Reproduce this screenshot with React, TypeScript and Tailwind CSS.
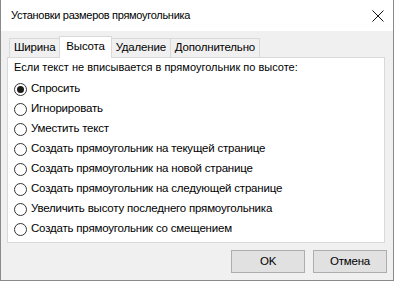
const options = [
  "Спросить",
  "Игнорировать",
  "Уместить текст",
  "Создать прямоугольник на текущей странице",
  "Создать прямоугольник на новой странице",
  "Создать прямоугольник на следующей странице",
  "Увеличить высоту последнего прямоугольника",
  "Создать прямоугольник со смещением",
];

const tabs = ["Ширина", "Высота", "Удаление", "Дополнительно"];

function Radio({ checked }: { checked?: boolean }) {
  return (
    <span className="flex h-[13px] w-[13px] shrink-0 items-center justify-center rounded-full border border-[#333] bg-white">
      {checked && <span className="h-[7px] w-[7px] rounded-full bg-[#1a1a1a]" />}
    </span>
  );
}

export default function App() {
  return (
    <div
      className="flex h-[281px] w-[394px] flex-col border-x border-b border-[#8a8a8a] bg-[#f0f0f0] text-[11.5px] tracking-[-0.2px] text-black"
      style={{ fontFamily: '"Liberation Sans", Arial, sans-serif' }}
    >
      <div className="flex h-[31px] shrink-0 items-center justify-between bg-white pl-[10px] pr-[9px]">
        <span className="text-[11px] tracking-[-0.3px]">Установки размеров прямоугольника</span>
        <svg width="12" height="12" viewBox="0 0 12 12">
          <path d="M0.5 0.5L11.5 11.5M11.5 0.5L0.5 11.5" stroke="#111" strokeWidth="1" />
        </svg>
      </div>

      <div className="flex flex-1 flex-col px-[6px] pt-[5px]">
        <div className="flex h-[21px] items-end pl-[2px]">
          {tabs.map((t, i) =>
            i === 1 ? (
              <div
                key={t}
                className="relative -mb-px flex h-[22px] items-center border-x border-t border-[#d9d9d9] bg-white px-[6px] pb-[2px]"
              >
                {t}
              </div>
            ) : (
              <div
                key={t}
                className={`flex h-[19px] items-center border-t border-[#d9d9d9] bg-[#f0f0f0] px-[4px] ${
                  i === 0 ? "border-l" : ""
                } ${i === 3 ? "border-r" : ""} ${i === 2 ? "border-r" : ""}`}
              >
                {t}
              </div>
            )
          )}
        </div>
        <div className="mr-[2px] flex h-[186px] flex-col border border-[#d9d9d9] bg-white pl-[6px] pt-[1px]">
          <div className="mb-[3px] text-[11px] leading-[17px] tracking-normal">
            Если текст не вписывается в прямоугольник по высоте:
          </div>
          {options.map((o, i) => (
            <div key={o} className="flex h-[20px] items-center gap-[4px]">
              <Radio checked={i === 0} />
              <span>{o}</span>
            </div>
          ))}
        </div>
        <div className="mt-[7px] flex justify-end gap-[8px]">
          <button className="h-[23px] w-[74px] border border-[#adadad] bg-[#e1e1e1]">OK</button>
          <button className="h-[23px] w-[74px] border border-[#adadad] bg-[#e1e1e1]">Отмена</button>
        </div>
      </div>
    </div>
  );
}
